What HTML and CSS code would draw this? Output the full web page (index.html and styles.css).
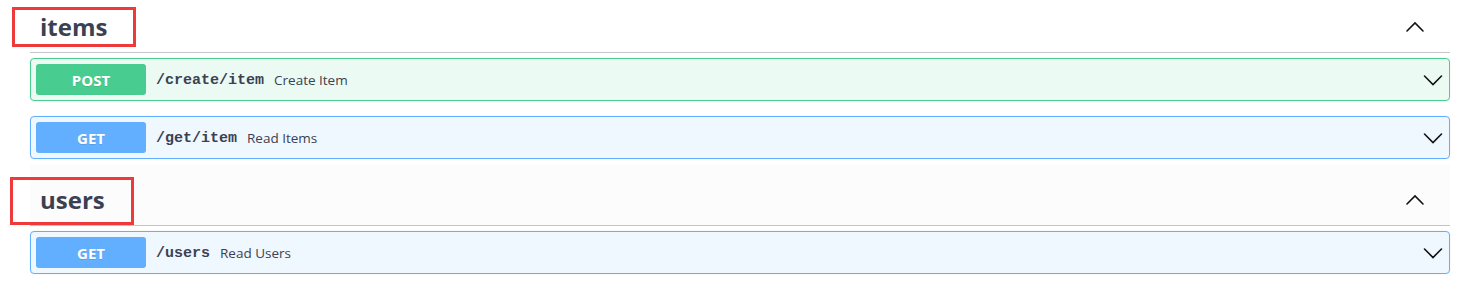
FILE: index.html
```html
<!DOCTYPE html>
<html lang="en">
<head>
<meta charset="utf-8">
<title>API</title>
<link rel="stylesheet" href="styles.css">
</head>
<body>
<div class="wrapper">
  <section class="tag-section">
    <div class="tag-heading">
      <h3 class="tag-title">items</h3>
      <svg class="arrow-up" width="20" height="20" viewBox="0 0 20 20"><polyline points="2,14 10,6 18,14" /></svg>
      <span class="mark mark-items"></span>
    </div>
    <div class="opblocks">
      <div class="opblock post">
        <span class="method">POST</span>
        <span class="path">/create/item</span>
        <span class="summary">Create Item</span>
        <svg class="arrow-down" width="20" height="20" viewBox="0 0 20 20"><polyline points="1.5,6 10,14.5 18.5,6" /></svg>
      </div>
      <div class="opblock get">
        <span class="method">GET</span>
        <span class="path">/get/item</span>
        <span class="summary">Read Items</span>
        <svg class="arrow-down" width="20" height="20" viewBox="0 0 20 20"><polyline points="1.5,6 10,14.5 18.5,6" /></svg>
      </div>
    </div>
  </section>
  <section class="tag-section">
    <div class="tag-heading hover">
      <h3 class="tag-title">users</h3>
      <svg class="arrow-up" width="20" height="20" viewBox="0 0 20 20"><polyline points="2,14 10,6 18,14" /></svg>
      <span class="mark mark-users"></span>
    </div>
    <div class="opblocks">
      <div class="opblock get">
        <span class="method">GET</span>
        <span class="path">/users</span>
        <span class="summary">Read Users</span>
        <svg class="arrow-down" width="20" height="20" viewBox="0 0 20 20"><polyline points="1.5,6 10,14.5 18.5,6" /></svg>
      </div>
    </div>
  </section>
</div>
</body>
</html>
```

FILE: styles.css
```css
html, body {
  margin: 0;
  padding: 0;
  background: #fff;
  overflow: hidden;
}

body {
  font-family: "Open Sans", "Noto Sans", sans-serif;
  color: #3b4151;
}

.wrapper {
  margin-top: -8px;
  padding: 0 26px 0 30px;
}

.tag-heading {
  position: relative;
  display: flex;
  align-items: center;
  padding: 19px 25px 9px 10px;
  border-bottom: 1px solid rgba(59, 65, 81, 0.3);
  margin-bottom: 5px;
}

.tag-heading.hover {
  background: #fcfcfc;
}

.tag-title {
  flex: 1;
  margin: 0;
  font-size: 24px;
  line-height: 32px;
  font-weight: 700;
  color: #3b4151;
}

.arrow-up polyline,
.arrow-down polyline {
  fill: none;
  stroke: #111;
  stroke-width: 1.6;
  stroke-linecap: round;
  stroke-linejoin: miter;
}

.mark {
  position: absolute;
  border: 3px solid #ee3a3a;
  box-sizing: border-box;
}

.mark-items {
  left: -18px;
  top: 15px;
  width: 124px;
  height: 40px;
}

.mark-users {
  left: -20px;
  top: 12px;
  width: 124px;
  height: 48px;
}

.opblocks {
  display: flex;
  flex-direction: column;
  gap: 15px;
  padding-bottom: 6px;
}

.opblock {
  display: flex;
  align-items: center;
  height: 43px;
  box-sizing: border-box;
  padding: 5px;
  border: 1px solid;
  border-radius: 4px;
  box-shadow: 0 0 2px rgba(0, 0, 0, 0.08);
}

.opblock.post {
  border-color: #49cc90;
  background: rgba(73, 204, 144, 0.1);
}

.opblock.get {
  border-color: #61affe;
  background: rgba(97, 175, 254, 0.1);
}

.method {
  width: 110px;
  height: 31px;
  display: flex;
  align-items: center;
  justify-content: center;
  border-radius: 3px;
  color: #fff;
  font-size: 15px;
  font-weight: 700;
  text-shadow: 0 1px 0 rgba(0, 0, 0, 0.1);
}

.post .method {
  background: #49cc90;
}

.get .method {
  background: #61affe;
}

.path {
  padding: 0 10px;
  margin-top: 2px;
  font-family: "Liberation Mono", "DejaVu Sans Mono", monospace;
  font-size: 15px;
  font-weight: 700;
  color: #3b4151;
}

.summary {
  flex: 1;
  margin-top: 1px;
  font-size: 13.5px;
  color: #3b4151;
}

.arrow-down {
  margin-right: 1px;
}
```
